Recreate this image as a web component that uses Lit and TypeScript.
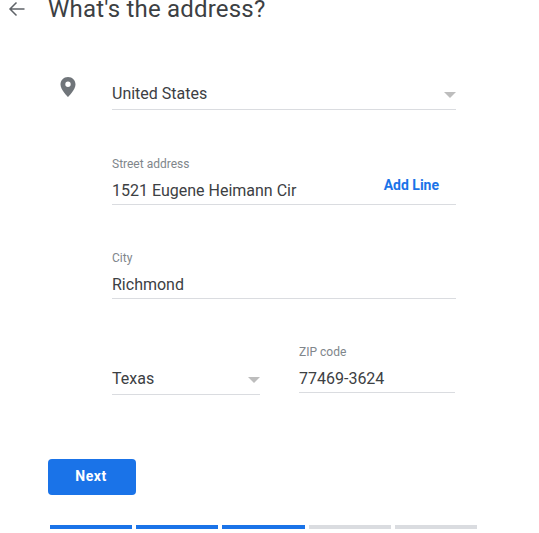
import { LitElement, html, css } from "lit";
import { customElement } from "lit/decorators.js";

@customElement("app-root")
export class AppRoot extends LitElement {
  static styles = css`
    :host { display: block; width: 539px; height: 533px; background: #fff; overflow: hidden; font-family: Roboto, "Liberation Sans", sans-serif; color: #3c4043; }
    .head { display: flex; align-items: center; height: 18px; padding-left: 8px; gap: 23px; }
    .head svg { width: 17px; height: 16px; flex: none; }
    h1 { margin: 0; font: 400 24px/22px Roboto, sans-serif; letter-spacing: 0.2px; color: #3c4043; white-space: nowrap; }
    .body { display: flex; flex-direction: column; padding-left: 112px; width: 344px; }
    .field { position: relative; display: flex; flex-direction: column; border-bottom: 1px solid #dadce0; }
    .label { font-size: 12px; line-height: 14px; color: #80868b; }
    .val { font-size: 16px; line-height: 20px; color: #3c4043; }
    .country { margin-top: 66px; height: 25px; }
    .pin { position: absolute; left: -54px; top: -8px; width: 20px; height: 24px; }
    .caret { position: absolute; right: 0; top: 8px; width: 0; height: 0; border-left: 6px solid transparent; border-right: 6px solid transparent; border-top: 6px solid #bdbdbd; }
    .street { margin-top: 47px; height: 47px; }
    .street .val { margin-top: 10px; }
    .add { position: absolute; right: 17px; top: 20px; font-size: 14px; line-height: 16px; font-weight: 700; color: #1a73e8; }
    .city { margin-top: 46px; height: 47px; }
    .city .val { margin-top: 10px; }
    .pair { display: flex; align-items: flex-start; gap: 39px; margin-top: 46px; }
    .state { width: 148px; height: 49px; justify-content: flex-end; }
    .state .val { margin-bottom: 5px; }
    .state .caret { top: 32px; }
    .zip { width: 156px; height: 47px; }
    .zip .val { margin-top: 10px; }
    .next { display: block; margin: 64px 0 0 48px; width: 88px; height: 36px; border: none; border-radius: 4px; background: #1a73e8; color: #fff; font: 700 14px Roboto, sans-serif; letter-spacing: 0.5px; padding: 0 2px 3px 0; }
    .steps { display: flex; margin: 30px 0 0 50px; gap: 4px; }
    .steps i { display: block; width: 82px; height: 4px; background: #dadce0; }
    .steps i.on { background: #1a73e8; }
    .steps i.wide { width: 83px; }
  `;

  render() {
    return html`
      <div class="head">
        <svg viewBox="0 0 17 16"><path d="M16.500 8H2M8.500 1.500 2 8l6.500 6.500" fill="none" stroke="#5f6368" stroke-width="1.500"/></svg>
        <h1>What's the address?</h1>
      </div>
      <div class="body">
        <div class="field country">
          <svg class="pin" viewBox="0 0 20 24"><path fill-rule="evenodd" fill="#70757a" d="M10 1C5.600 1 2.500 4.300 2.500 8.400 2.500 13.600 10 21 10 21s7.500-7.400 7.500-12.600C17.500 4.300 14.400 1 10 1Zm0 10a2.700 2.700 0 1 1 0-5.400A2.700 2.700 0 0 1 10 11Z"/></svg>
          <div class="val">United States</div>
          <div class="caret"></div>
        </div>
        <div class="field street">
          <div class="label">Street address</div>
          <div class="val">1521 Eugene Heimann Cir</div>
          <div class="add">Add Line</div>
        </div>
        <div class="field city">
          <div class="label">City</div>
          <div class="val">Richmond</div>
        </div>
        <div class="pair">
          <div class="field state">
            <div class="val">Texas</div>
            <div class="caret"></div>
          </div>
          <div class="field zip">
            <div class="label">ZIP code</div>
            <div class="val">77469-3624</div>
          </div>
        </div>
      </div>
      <button class="next">Next</button>
      <div class="steps">
        <i class="on"></i><i class="on"></i><i class="on wide"></i><i></i><i></i>
      </div>
    `;
  }
}
